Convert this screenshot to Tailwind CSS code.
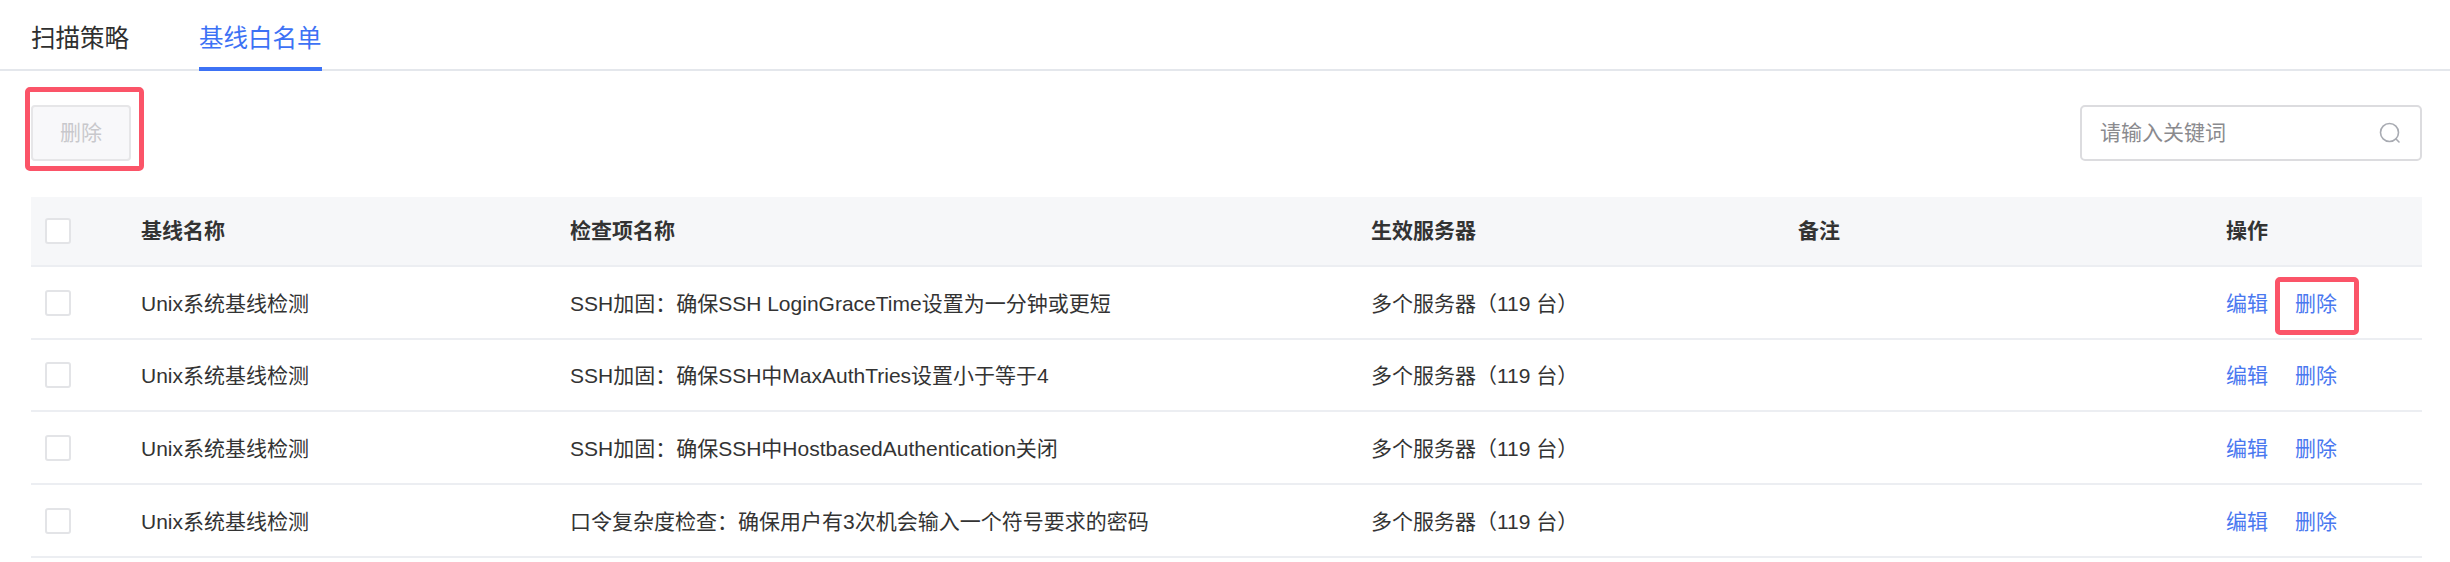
<!DOCTYPE html>
<html lang="zh-CN">
<head>
<meta charset="utf-8">
<script src="https://cdn.jsdelivr.net/npm/@tailwindcss/browser@4"></script>
</head>
<body class="bg-white overflow-hidden">
<div class="relative w-[2450px] h-[562px] overflow-hidden font-['Liberation_Sans','Noto_Sans_CJK_SC',sans-serif] text-[21px] text-[#333]">
  <div class="flex h-[71px] border-b-2 border-[#e4e7ec] pl-[31px] gap-[70px] text-[24.5px]">
    <div class="h-[71px] leading-[78px] text-[#2f2f2f]">扫描策略</div>
    <div class="h-[71px] leading-[78px] text-[#3d72f5] border-b-[4px] border-[#3d72f5]">基线白名单</div>
  </div>
  <div class="flex items-start justify-between pl-[31px] pr-[28px] pt-[34px] h-[126px]">
    <button class="w-[100px] h-[56px] rounded-[4px] border-2 border-[#e6e6e8] bg-[#f8f8fa] text-[#c8c8cc]">删除</button>
    <div class="flex items-center justify-between w-[342px] h-[56px] rounded-[5px] border-2 border-[#dcdcdf] pl-[18px] pr-[19px] text-[#8a8a8e]">
      <span>请输入关键词</span>
      <svg class="w-[22px] h-[22px]" viewBox="0 0 22 22" fill="none" stroke="#a8abb2" stroke-width="1.6"><circle cx="10.5" cy="10.5" r="9"/><path d="M17 17l3 3" stroke-linecap="round"/></svg>
    </div>
  </div>
  <div class="mx-[31px] mr-[28px]">
    <div class="grid grid-cols-[110px_429px_801px_427px_428px_1fr] items-center h-[70px] bg-[#f6f7f9] border-b-2 border-[#eceef2] font-bold">
      <div class="pl-[14px]"><div class="w-[26px] h-[26px] rounded-[3px] border-2 border-[#e3e4e7] bg-white"></div></div>
      <div>基线名称</div><div>检查项名称</div><div>生效服务器</div><div>备注</div><div>操作</div>
    </div>
    <div class="grid grid-cols-[110px_429px_801px_427px_428px_1fr] items-center h-[73px] border-b-2 border-[#eceef2]">
      <div class="pl-[14px]"><div class="w-[26px] h-[26px] rounded-[3px] border-2 border-[#e3e4e7] bg-white"></div></div>
      <div class="pt-[2px]">Unix系统基线检测</div><div class="pt-[2px]">SSH加固：确保SSH LoginGraceTime设置为一分钟或更短</div><div class="pt-[2px]">多个服务器（119 台）</div><div></div>
      <div class="flex gap-[27px] pt-[2px] text-[#4a78f0]"><span>编辑</span><span>删除</span></div>
    </div>
    <div class="grid grid-cols-[110px_429px_801px_427px_428px_1fr] items-center h-[72px] border-b-2 border-[#eceef2]">
      <div class="pl-[14px]"><div class="w-[26px] h-[26px] rounded-[3px] border-2 border-[#e3e4e7] bg-white"></div></div>
      <div class="pt-[2px]">Unix系统基线检测</div><div class="pt-[2px]">SSH加固：确保SSH中MaxAuthTries设置小于等于4</div><div class="pt-[2px]">多个服务器（119 台）</div><div></div>
      <div class="flex gap-[27px] pt-[2px] text-[#4a78f0]"><span>编辑</span><span>删除</span></div>
    </div>
    <div class="grid grid-cols-[110px_429px_801px_427px_428px_1fr] items-center h-[73px] border-b-2 border-[#eceef2]">
      <div class="pl-[14px]"><div class="w-[26px] h-[26px] rounded-[3px] border-2 border-[#e3e4e7] bg-white"></div></div>
      <div class="pt-[2px]">Unix系统基线检测</div><div class="pt-[2px]">SSH加固：确保SSH中HostbasedAuthentication关闭</div><div class="pt-[2px]">多个服务器（119 台）</div><div></div>
      <div class="flex gap-[27px] pt-[2px] text-[#4a78f0]"><span>编辑</span><span>删除</span></div>
    </div>
    <div class="grid grid-cols-[110px_429px_801px_427px_428px_1fr] items-center h-[73px] border-b-2 border-[#eceef2]">
      <div class="pl-[14px]"><div class="w-[26px] h-[26px] rounded-[3px] border-2 border-[#e3e4e7] bg-white"></div></div>
      <div class="pt-[2px]">Unix系统基线检测</div><div class="pt-[2px]">口令复杂度检查：确保用户有3次机会输入一个符号要求的密码</div><div class="pt-[2px]">多个服务器（119 台）</div><div></div>
      <div class="flex gap-[27px] pt-[2px] text-[#4a78f0]"><span>编辑</span><span>删除</span></div>
    </div>
  </div>
  <div class="absolute left-[25px] top-[87px] w-[119px] h-[84px] rounded-[5px] border-[5px] border-[#fb5468]"></div>
  <div class="absolute left-[2275px] top-[277px] w-[84px] h-[58px] rounded-[5px] border-[5px] border-[#fb5468]"></div>
</div>
</body>
</html>
